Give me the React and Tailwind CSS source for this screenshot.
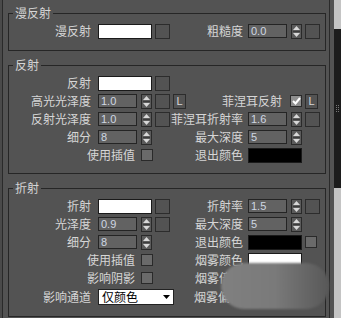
import React from "react";

const Arrows = () => (
  <div className="ml-[4px] w-[11px] h-[15px] border border-[#2a2a2a] bg-[#5b5b5b] flex flex-col items-center justify-center gap-[1px]">
    <svg width="7" height="4" viewBox="0 0 7 4">
      <path d="M3.5 0 L7 4 L0 4 Z" fill="#d8d8d8" />
    </svg>
    <div className="w-[7px] h-px bg-[#3c3c3c]" />
    <svg width="7" height="4" viewBox="0 0 7 4">
      <path d="M0 0 L7 0 L3.5 4 Z" fill="#d8d8d8" />
    </svg>
  </div>
);

const Spinner = ({ value }) => (
  <div className="flex items-center">
    <div className="w-[39px] h-[14px] bg-[#626262] border border-[#242424] pl-[2px] flex items-center text-[11px] leading-[12px] text-[#cfd7e3] font-['Liberation_Sans',sans-serif]">
      {value}
    </div>
    <Arrows />
  </div>
);

const Swatch = ({ color }) => (
  <div className={`w-[54px] h-[15px] border border-[#1a1a1a] ${color}`} />
);

const Square = () => <div className="w-[15px] h-[15px] border border-[#2c2c2c]" />;

const Check = ({ checked }) =>
  checked ? (
    <div className="w-[12px] h-[12px] border border-[#2a2a2a] bg-[#8e8e8e] flex items-center justify-center">
      <svg width="9" height="8" viewBox="0 0 9 8">
        <path d="M1 4 L3.5 6.5 L8 1" stroke="#ffffff" strokeWidth="2" fill="none" />
      </svg>
    </div>
  ) : (
    <div className="w-[12px] h-[12px] border border-[#2a2a2a] bg-[#6a6a6a]" />
  );

const LBox = () => (
  <div className="w-[13px] h-[15px] border border-[#2c2c2c] flex items-center justify-center text-[11px] text-[#d8d8d8] font-['Liberation_Sans',sans-serif]">
    L
  </div>
);

const Row = ({ children }) => (
  <div className="grid grid-cols-[89px_57px_15px_18px_60px_57px_15px] h-[18px] items-center">
    {children}
  </div>
);

const L1 = ({ children }) => (
  <div className="flex justify-end whitespace-nowrap pr-[7px]">{children}</div>
);

const L2 = ({ children }) => (
  <div className="flex justify-end whitespace-nowrap pr-[5px]">{children}</div>
);

const Group = ({ title, children, className }) => (
  <fieldset className={`ml-[5px] w-[318px] border border-[#262626] ${className}`}>
    <legend className="ml-[4px] px-[2px] leading-[14px]">{title}</legend>
    {children}
  </fieldset>
);

export default function App() {
  return (
    <div className="relative w-[341px] h-[318px] overflow-hidden bg-[#535353] flex text-[12px] leading-[14px] text-[#d6d6d6] font-['Noto_Sans_CJK_SC','Noto_Sans',sans-serif]">
      <div className="w-[2px] bg-[#4a4a4a]" />
      <div className="w-[328px] border-l border-r border-[#2a2a2a] pt-[6px]">
        {/* 漫反射 */}
        <Group title="漫反射" className="pt-[2px] pb-[10px]">
          <Row>
            <L1>漫反射</L1>
            <Swatch color="bg-white" />
            <Square />
            <div />
            <L2>粗糙度</L2>
            <Spinner value="0.0" />
            <Square />
          </Row>
        </Group>

        {/* 反射 */}
        <Group title="反射" className="mt-[7px] pt-[2px] pb-[9px]">
          <Row>
            <L1>反射</L1>
            <Swatch color="bg-white" />
            <Square />
            <div />
            <div />
            <div />
            <div />
          </Row>
          <Row>
            <L1>高光光泽度</L1>
            <Spinner value="1.0" />
            <Square />
            <div className="pl-[3px]">
              <LBox />
            </div>
            <div className="col-span-2 flex items-center justify-end gap-[8px] pr-[3px]">
              <span className="whitespace-nowrap">菲涅耳反射</span>
              <Check checked />
            </div>
            <LBox />
          </Row>
          <Row>
            <L1>反射光泽度</L1>
            <Spinner value="1.0" />
            <Square />
            <div />
            <L2>菲涅耳折射率</L2>
            <Spinner value="1.6" />
            <Square />
          </Row>
          <Row>
            <L1>细分</L1>
            <Spinner value="8" />
            <div />
            <div />
            <L2>最大深度</L2>
            <Spinner value="5" />
            <div />
          </Row>
          <Row>
            <div className="col-span-2 flex items-center justify-end gap-[6px] pr-[2px]">
              <span className="whitespace-nowrap">使用插值</span>
              <Check />
            </div>
            <div />
            <div />
            <L2>退出颜色</L2>
            <Swatch color="bg-black" />
            <div />
          </Row>
        </Group>

        {/* 折射 */}
        <Group title="折射" className="mt-[7px] pt-[2px] pb-[9px]">
          <Row>
            <L1>折射</L1>
            <Swatch color="bg-white" />
            <Square />
            <div />
            <L2>折射率</L2>
            <Spinner value="1.5" />
            <Square />
          </Row>
          <Row>
            <L1>光泽度</L1>
            <Spinner value="0.9" />
            <Square />
            <div />
            <L2>最大深度</L2>
            <Spinner value="5" />
            <div />
          </Row>
          <Row>
            <L1>细分</L1>
            <Spinner value="8" />
            <div />
            <div />
            <L2>退出颜色</L2>
            <Swatch color="bg-black" />
            <Check />
          </Row>
          <Row>
            <div className="col-span-2 flex items-center justify-end gap-[6px] pr-[2px]">
              <span className="whitespace-nowrap">使用插值</span>
              <Check />
            </div>
            <div />
            <div />
            <L2>烟雾颜色</L2>
            <Swatch color="bg-white" />
            <div />
          </Row>
          <Row>
            <div className="col-span-2 flex items-center justify-end gap-[6px] pr-[2px]">
              <span className="whitespace-nowrap">影响阴影</span>
              <Check />
            </div>
            <div />
            <div />
            <L2>烟雾倍增</L2>
            <Spinner value="1.0" />
            <div />
          </Row>
          <div className="grid grid-cols-[89px_89px_60px_57px_15px] h-[20px] items-center">
            <L1>影响通道</L1>
            <div className="w-[76px] h-[16px] bg-white border border-[#222] flex items-center justify-between pl-[3px] pr-[3px] text-black text-[12px]">
              <span>仅颜色</span>
              <svg width="7" height="4" viewBox="0 0 7 4">
                <path d="M0 0 L7 0 L3.5 4 Z" fill="#000" />
              </svg>
            </div>
            <L2>烟雾偏移</L2>
            <Spinner value="0.0" />
            <div />
          </div>
        </Group>
      </div>
      <div className="w-[4px]" />
      <div className="w-[7px] bg-[#c4c4c4]">
        <div className="mt-[29px] h-[159px] bg-[#1c1c1c] flex items-center justify-center gap-[1px]">
          <div className="flex flex-col gap-[1px]">
            <div className="w-px h-px bg-[#777]" />
            <div className="w-px h-px bg-[#777]" />
            <div className="w-px h-px bg-[#777]" />
            <div className="w-px h-px bg-[#777]" />
          </div>
          <div className="flex flex-col gap-[1px]">
            <div className="w-px h-px bg-[#777]" />
            <div className="w-px h-px bg-[#777]" />
            <div className="w-px h-px bg-[#777]" />
            <div className="w-px h-px bg-[#777]" />
          </div>
        </div>
      </div>

      {/* blurred watermark */}
      <div className="absolute left-[221px] top-[263px] w-[108px] h-[46px] rounded-[24px] bg-gradient-to-r from-[#808080] via-[#7a7a7a] to-[#585858] blur-[1px]" />
    </div>
  );
}
